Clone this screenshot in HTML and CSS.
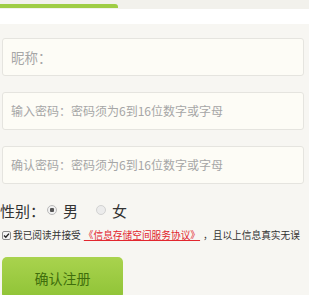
FILE: index.html
```html
<!DOCTYPE html>
<html lang="zh-CN">
<head>
  <meta charset="UTF-8">
  <title>注册</title>
  <link rel="stylesheet" href="styles.css">
</head>
<body>
  <div class="tabs">
    <div class="tab-line"></div>
  </div>
  <div class="gap"></div>

  <form class="reg-form">
    <div class="field">昵称：</div>
    <div class="field">输入密码：密码须为6到16位数字或字母</div>
    <div class="field">确认密码：密码须为6到16位数字或字母</div>

    <div class="gender">
      <span>性别：</span>
      <span class="radio on"></span><span class="opt">男</span>
      <span class="radio"></span><span class="opt">女</span>
    </div>

    <div class="agree">
      <span class="check">
        <svg width="9" height="9" viewBox="0 0 9 9">
          <rect x="0.5" y="0.5" width="8" height="8" rx="1.5" fill="#f4f4f4" stroke="#8a8a8a"/>
          <path d="M2 4.6 L3.8 6.3 L7 2.6" fill="none" stroke="#222" stroke-width="1.4"/>
        </svg>
      </span>
      <span>我已阅读并接受</span>
      <a class="deal" href="#">《信息存储空间服务协议》</a>
      <span>，且以上信息真实无误</span>
    </div>

    <button type="button" class="btn-reg">确认注册</button>
  </form>
</body>
</html>
```

FILE: styles.css
```css
body {
  margin: 0;
  background: #f7f6f2;
  font-family: "Noto Sans CJK SC", "Liberation Sans", sans-serif;
  overflow: hidden;
}

.tabs {
  height: 9px;
  padding-top: 4px;
  box-sizing: border-box;
  background: #f2f1ec;
}

.tab-line {
  width: 118px;
  height: 4px;
  background: #9fcd45;
  border-radius: 0 3px 0 0;
}

.gap {
  height: 15px;
  background: #fff;
}

.reg-form {
  padding: 14px 5px 0 2px;
}

.field {
  height: 36px;
  margin-bottom: 16px;
  padding-left: 8px;
  border: 1px solid #e5e4df;
  border-radius: 3px;
  background: #fdfcf6;
  color: #a6a6a6;
  font-size: 12px;
  line-height: 36px;
}

.field:first-child {
  font-size: 13.5px;
}

.gender {
  display: flex;
  align-items: center;
  height: 20px;
  margin-top: 11px;
  margin-left: -2px;
  font-size: 15px;
  color: #333;
}

.radio {
  width: 8px;
  height: 8px;
  margin: 0 6px 0 2px;
  border: 1px solid #d2d2d2;
  border-radius: 50%;
  background: #ececec;
  box-sizing: content-box;
}

.radio.on {
  background: radial-gradient(circle, #555 0 2px, #f1f1f1 2.5px);
  border-color: #b9b9b9;
}

.opt {
  margin-right: 16px;
}

.agree {
  display: flex;
  align-items: center;
  margin-top: 7px;
  height: 16px;
  font-size: 9.7px;
  color: #333;
  white-space: nowrap;
}

.check {
  display: flex;
  flex: none;
  width: 9px;
  height: 9px;
  margin-right: 2px;
}

.deal {
  margin: 0 3px;
  color: #e2262e;
}

.btn-reg {
  display: block;
  width: 121px;
  height: 42px;
  margin-top: 14px;
  border: none;
  border-radius: 5px;
  background: linear-gradient(#a9d34e, #8fc336);
  color: #3f6e0c;
  font-family: inherit;
  font-size: 14px;
  padding-bottom: 2px;
}
```
